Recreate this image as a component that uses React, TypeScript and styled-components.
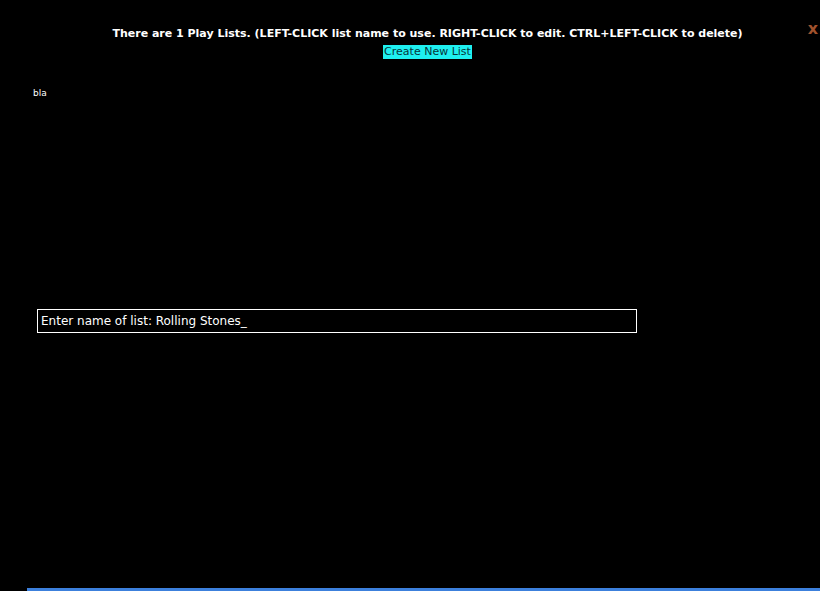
import styled, { createGlobalStyle } from "styled-components";

const GlobalStyle = createGlobalStyle`
html, body {
    margin: 0;
    padding: 0;
    background: #000;
    height: 100%;
}
#root {
    height: 100%;
}
`;

export default function App() {
    return (
        <>
            <GlobalStyle />
            <Page>
                <Header>
                    <Title>There are 1 Play Lists. (LEFT-CLICK list name to use. RIGHT-CLICK to edit. CTRL+LEFT-CLICK to delete)</Title>
                    <CreateButton>Create New List</CreateButton>
                    <CloseButton>x</CloseButton>
                </Header>
                <ListArea>
                    <ListName>bla</ListName>
                </ListArea>
                <NameBox>Enter name of list: Rolling Stones_</NameBox>
                <Spacer />
                <BottomBar />
            </Page>
        </>
    );
}

const Page = styled.div`
display: flex;
flex-direction: column;
height: 100%;
font-family: "DejaVu Sans", Verdana, sans-serif;
color: #fff;
`;

const Header = styled.div`
position: relative;
display: flex;
flex-direction: column;
align-items: center;
padding: 27px 0 0 35px;
gap: 4px;
`;

const Title = styled.div`
font-size: 11px;
font-weight: bold;
line-height: 14px;
`;

const CreateButton = styled.button`
background: #1ef0f0;
color: #06363a;
border: none;
font-family: inherit;
font-size: 11px;
line-height: 14px;
padding: 0 1px;
margin: 0;
cursor: pointer;
`;

const CloseButton = styled.span`
position: absolute;
top: 19px;
right: 2px;
color: #a0522d;
font-size: 16px;
font-weight: bold;
`;

const ListArea = styled.div`
padding: 29px 0 0 33px;
height: 221px;
`;

const ListName = styled.div`
font-size: 9px;
line-height: 11px;
`;

const NameBox = styled.div`
margin-left: 37px;
width: 595px;
height: 22px;
border: 1px solid #fff;
padding-left: 3px;
font-size: 12px;
line-height: 22px;
`;

const Spacer = styled.div`
flex: 1;
`;

const BottomBar = styled.div`
margin-left: 27px;
height: 3px;
background: #3c80dc;
`;
